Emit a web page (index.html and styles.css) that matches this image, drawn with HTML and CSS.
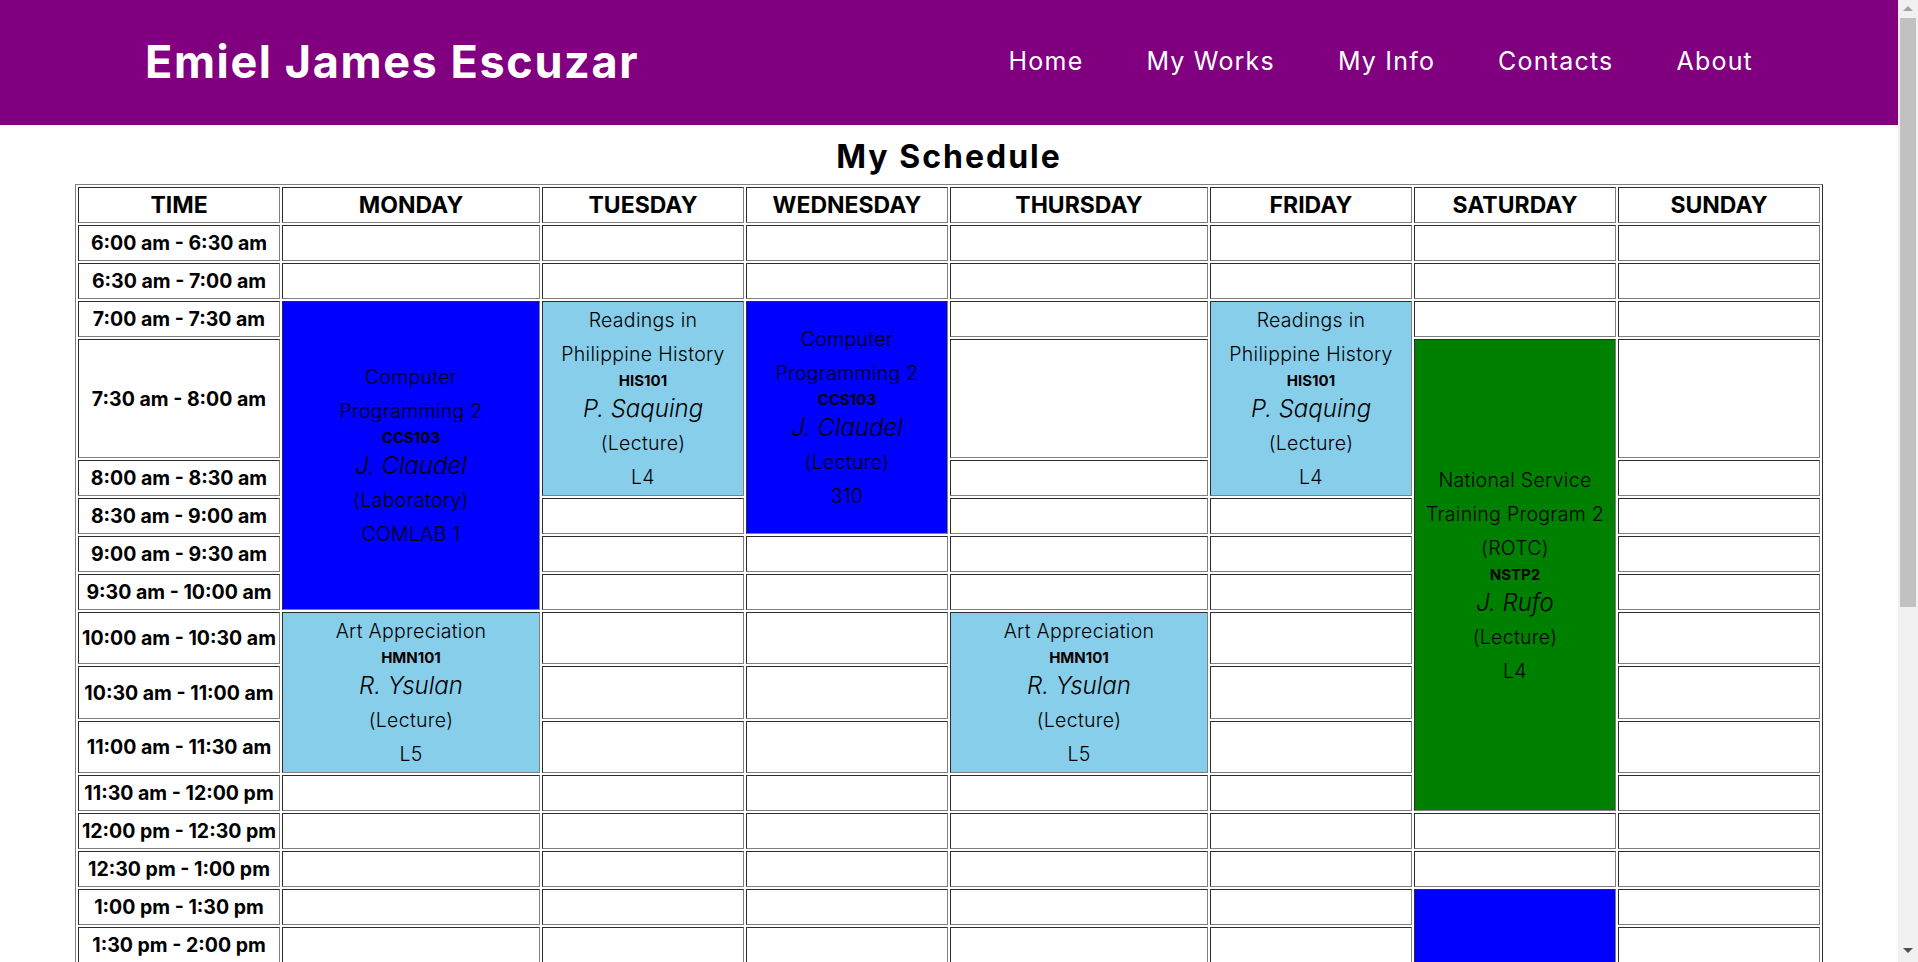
FILE: index.html
```html
<!DOCTYPE html>
<html lang="en">
<head>
<meta charset="utf-8">
<title>My Schedule - Emiel James Escuzar</title>
<link rel="stylesheet" href="styles.css">
</head>
<body>
<header class="site-header">
  <h1 class="brand">Emiel James Escuzar</h1>
  <nav class="nav">
    <a href="#">Home</a>
    <a href="#">My Works</a>
    <a href="#">My Info</a>
    <a href="#">Contacts</a>
    <a href="#">About</a>
  </nav>
</header>
<main>
  <h2 class="page-title">My Schedule</h2>
  <table class="schedule">
    <thead>
      <tr class="row">
        <th class="c-narrow">TIME</th>
        <th class="c-wide">MONDAY</th>
        <th class="c-narrow">TUESDAY</th>
        <th class="c-narrow">WEDNESDAY</th>
        <th class="c-wide">THURSDAY</th>
        <th class="c-narrow">FRIDAY</th>
        <th class="c-narrow">SATURDAY</th>
        <th class="c-narrow">SUNDAY</th>
      </tr>
    </thead>
    <tbody>
      <tr class="row"><td class="time">6:00 am - 6:30 am</td><td></td><td></td><td></td><td></td><td></td><td></td><td></td></tr>
      <tr class="row"><td class="time">6:30 am - 7:00 am</td><td></td><td></td><td></td><td></td><td></td><td></td><td></td></tr>
      <tr class="row">
        <td class="time">7:00 am - 7:30 am</td>
        <td class="course blue" rowspan="6">
          <div class="t">Computer</div>
          <div class="t">Programming 2</div>
          <div class="code">CCS103</div>
          <div class="inst">J. Claudel</div>
          <div class="t">(Laboratory)</div>
          <div class="t">COMLAB 1</div>
        </td>
        <td class="course sky" rowspan="3">
          <div class="t">Readings in</div>
          <div class="t">Philippine History</div>
          <div class="code">HIS101</div>
          <div class="inst">P. Saquing</div>
          <div class="t">(Lecture)</div>
          <div class="t">L4</div>
        </td>
        <td class="course blue" rowspan="4">
          <div class="t">Computer</div>
          <div class="t">Programming 2</div>
          <div class="code">CCS103</div>
          <div class="inst">J. Claudel</div>
          <div class="t">(Lecture)</div>
          <div class="t">310</div>
        </td>
        <td></td>
        <td class="course sky" rowspan="3">
          <div class="t">Readings in</div>
          <div class="t">Philippine History</div>
          <div class="code">HIS101</div>
          <div class="inst">P. Saquing</div>
          <div class="t">(Lecture)</div>
          <div class="t">L4</div>
        </td>
        <td></td>
        <td></td>
      </tr>
      <tr class="row-tall">
        <td class="time">7:30 am - 8:00 am</td>
        <td></td>
        <td class="course green" rowspan="9">
          <div class="t">National Service</div>
          <div class="t">Training Program 2</div>
          <div class="t">(ROTC)</div>
          <div class="code">NSTP2</div>
          <div class="inst">J. Rufo</div>
          <div class="t">(Lecture)</div>
          <div class="t">L4</div>
        </td>
        <td></td>
      </tr>
      <tr class="row"><td class="time">8:00 am - 8:30 am</td><td></td><td></td></tr>
      <tr class="row"><td class="time">8:30 am - 9:00 am</td><td></td><td></td><td></td><td></td></tr>
      <tr class="row"><td class="time">9:00 am - 9:30 am</td><td></td><td></td><td></td><td></td><td></td></tr>
      <tr class="row"><td class="time">9:30 am - 10:00 am</td><td></td><td></td><td></td><td></td><td></td></tr>
      <tr class="row-mid">
        <td class="time">10:00 am - 10:30 am</td>
        <td class="course sky" rowspan="3">
          <div class="t">Art Appreciation</div>
          <div class="code">HMN101</div>
          <div class="inst">R. Ysulan</div>
          <div class="t">(Lecture)</div>
          <div class="t">L5</div>
        </td>
        <td></td>
        <td></td>
        <td class="course sky" rowspan="3">
          <div class="t">Art Appreciation</div>
          <div class="code">HMN101</div>
          <div class="inst">R. Ysulan</div>
          <div class="t">(Lecture)</div>
          <div class="t">L5</div>
        </td>
        <td></td>
        <td></td>
      </tr>
      <tr class="row-mid2"><td class="time">10:30 am - 11:00 am</td><td></td><td></td><td></td><td></td></tr>
      <tr class="row-mid"><td class="time">11:00 am - 11:30 am</td><td></td><td></td><td></td><td></td></tr>
      <tr class="row"><td class="time">11:30 am - 12:00 pm</td><td></td><td></td><td></td><td></td><td></td><td></td></tr>
      <tr class="row"><td class="time">12:00 pm - 12:30 pm</td><td></td><td></td><td></td><td></td><td></td><td></td><td></td></tr>
      <tr class="row"><td class="time">12:30 pm - 1:00 pm</td><td></td><td></td><td></td><td></td><td></td><td></td><td></td></tr>
      <tr class="row">
        <td class="time">1:00 pm - 1:30 pm</td><td></td><td></td><td></td><td></td><td></td>
        <td class="course blue" rowspan="10">
          <div class="t">Computer</div>
          <div class="t">Programming 2</div>
          <div class="code">CCS103</div>
          <div class="inst">J. Claudel</div>
          <div class="t">(Laboratory)</div>
          <div class="t">COMLAB 1</div>
        </td>
        <td></td>
      </tr>
      <tr class="row"><td class="time">1:30 pm - 2:00 pm</td><td></td><td></td><td></td><td></td><td></td><td></td></tr>
      <tr class="row"><td class="time">2:00 pm - 2:30 pm</td><td></td><td></td><td></td><td></td><td></td><td></td></tr>
      <tr class="row"><td class="time">2:30 pm - 3:00 pm</td><td></td><td></td><td></td><td></td><td></td><td></td></tr>
      <tr class="row"><td class="time">3:00 pm - 3:30 pm</td><td></td><td></td><td></td><td></td><td></td><td></td></tr>
      <tr class="row"><td class="time">3:30 pm - 4:00 pm</td><td></td><td></td><td></td><td></td><td></td><td></td></tr>
      <tr class="row"><td class="time">4:00 pm - 4:30 pm</td><td></td><td></td><td></td><td></td><td></td><td></td></tr>
      <tr class="row"><td class="time">4:30 pm - 5:00 pm</td><td></td><td></td><td></td><td></td><td></td><td></td></tr>
      <tr class="row"><td class="time">5:00 pm - 5:30 pm</td><td></td><td></td><td></td><td></td><td></td><td></td></tr>
      <tr class="row"><td class="time">5:30 pm - 6:00 pm</td><td></td><td></td><td></td><td></td><td></td><td></td></tr>
      <tr class="row"><td class="time">6:00 pm - 6:30 pm</td><td></td><td></td><td></td><td></td><td></td><td></td><td></td></tr>
      <tr class="row"><td class="time">6:30 pm - 7:00 pm</td><td></td><td></td><td></td><td></td><td></td><td></td><td></td></tr>
      <tr class="row"><td class="time">7:00 pm - 7:30 pm</td><td></td><td></td><td></td><td></td><td></td><td></td><td></td></tr>
      <tr class="row"><td class="time">7:30 pm - 8:00 pm</td><td></td><td></td><td></td><td></td><td></td><td></td><td></td></tr>
      <tr class="row"><td class="time">8:00 pm - 8:30 pm</td><td></td><td></td><td></td><td></td><td></td><td></td><td></td></tr>
      <tr class="row"><td class="time">8:30 pm - 9:00 pm</td><td></td><td></td><td></td><td></td><td></td><td></td><td></td></tr>
    </tbody>
  </table>
</main>
<div class="scrollbar" aria-hidden="true">
  <span class="sb-up"></span>
  <span class="sb-thumb"></span>
  <span class="sb-down"></span>
</div>
</body>
</html>
```

FILE: styles.css
```css
* {
  box-sizing: border-box;
}

html,
body {
  margin: 0;
  padding: 0;
}

body {
  margin-right: 20px;
  font-family: Inter, "Open Sans", "Noto Sans", sans-serif;
  color: #000;
  background: #fff;
}

.site-header {
  background: #800080;
  height: 125px;
  display: flex;
  align-items: center;
  justify-content: space-between;
  padding: 0 145px 3px;
}

.brand {
  margin: 0;
  color: #fff;
  font-size: 45px;
  font-weight: 700;
  letter-spacing: 1.6px;
  line-height: 1;
}

.nav {
  display: flex;
  gap: 63px;
}

.nav a {
  color: #fff;
  text-decoration: none;
  font-size: 25px;
  font-weight: 400;
  letter-spacing: 1.2px;
  line-height: 1;
}

.page-title {
  margin: 0;
  padding-top: 8px;
  text-align: center;
  font-size: 32px;
  font-weight: 700;
  letter-spacing: 2px;
  line-height: 48px;
}

.schedule {
  margin: 3px auto 16px;
  width: 1748px;
  table-layout: fixed;
  border-collapse: separate;
  border-spacing: 2px;
  border: 1px outset grey;
}

.schedule th,
.schedule td {
  border: 1px inset grey;
  padding: 1px;
  text-align: center;
  vertical-align: middle;
}

.schedule th {
  font-size: 23px;
  font-weight: 700;
  line-height: 32px;
}

.c-narrow {
  width: 202px;
}

.c-wide {
  width: 258px;
}

.row {
  height: 36px;
}

.row-tall {
  height: 119px;
}

.row-mid {
  height: 52px;
}

.row-mid2 {
  height: 53px;
}

.time {
  font-size: 19.5px;
  font-weight: 700;
  line-height: 32px;
  white-space: nowrap;
}

.course {
  font-weight: 300;
}

.course .t {
  font-size: 19.5px;
  letter-spacing: 0.3px;
  line-height: 34px;
}

.course .code {
  font-size: 15px;
  font-weight: 700;
  line-height: 20px;
}

.course .inst {
  font-size: 24px;
  font-style: italic;
  line-height: 35px;
}

.blue {
  background: #0000ff;
}

.sky {
  background: #87ceeb;
}

.green {
  background: #008000;
}

/* browser scrollbar seen at the right edge of the capture */
.scrollbar {
  position: fixed;
  top: 0;
  right: 0;
  width: 20px;
  height: 100vh;
  background: #f1f1f1;
  display: flex;
  flex-direction: column;
  align-items: center;
}

.sb-up {
  margin-top: 6px;
  width: 0;
  height: 0;
  border-left: 5px solid transparent;
  border-right: 5px solid transparent;
  border-bottom: 5px solid #a3a3a3;
}

.sb-thumb {
  margin-top: 7px;
  width: 16px;
  height: 589px;
  background: #c1c1c1;
}

.sb-down {
  margin-top: auto;
  margin-bottom: 9px;
  width: 0;
  height: 0;
  border-left: 5px solid transparent;
  border-right: 5px solid transparent;
  border-top: 5px solid #505050;
}
```
